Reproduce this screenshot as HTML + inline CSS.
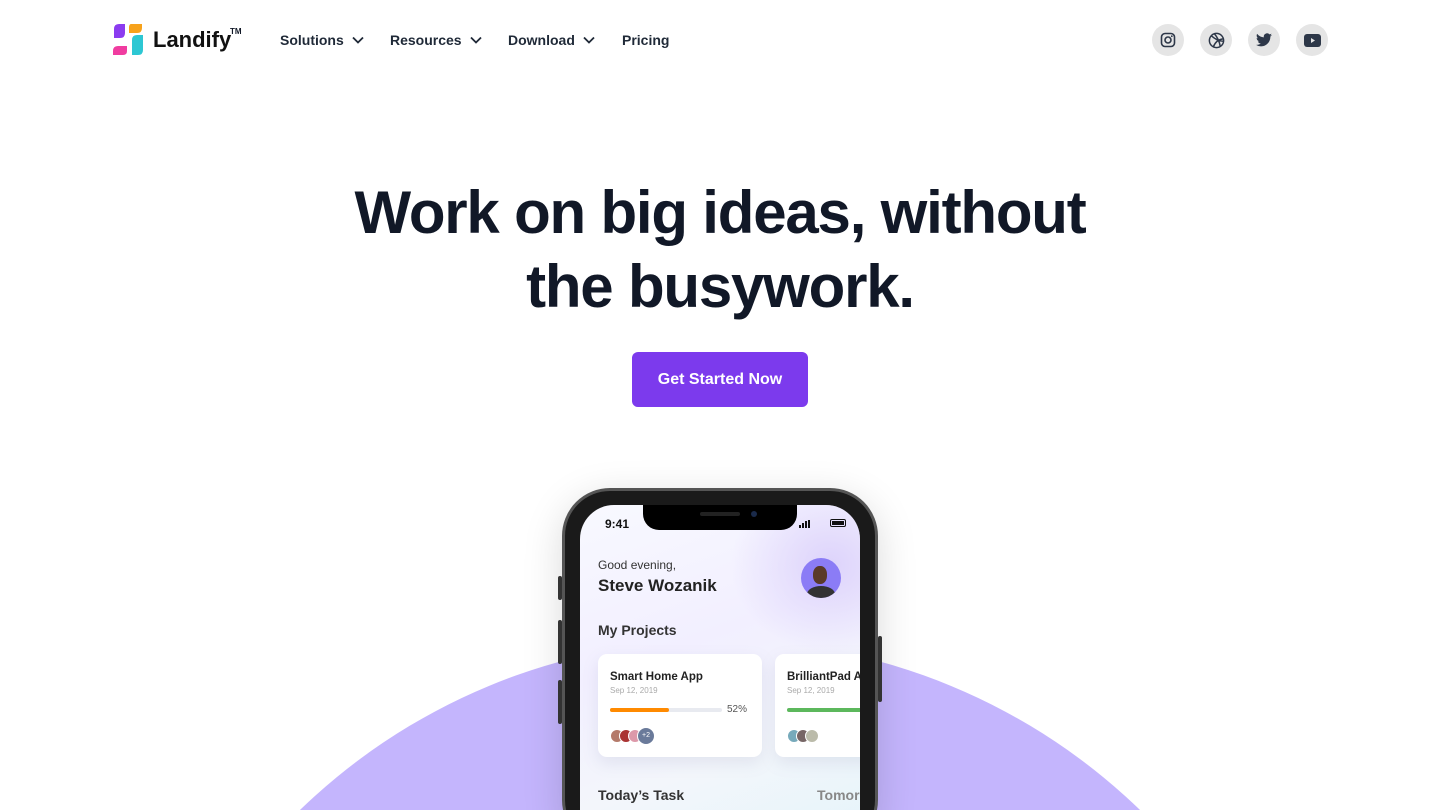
<!DOCTYPE html>
<html style="overflow:hidden;width:1440px;height:810px"><head><meta charset="utf-8"><style>
*{margin:0;padding:0;box-sizing:border-box}
body{width:1440px;height:810px;overflow:hidden;background:#fff;font-family:"Liberation Sans",sans-serif;position:relative;color:#111827}
#wrap{position:absolute;left:0;top:0;width:1440px;height:810px;overflow:hidden}
.nav{position:absolute;top:40px;transform:translateY(-50%);font-size:14px;font-weight:700;color:#1f2937;display:flex;align-items:center}
.nav svg{margin-left:8px}
.soc{position:absolute;top:24px;width:32px;height:32px;border-radius:50%;background:#e5e5e5;display:flex;align-items:center;justify-content:center}
h1{position:absolute;top:176px;left:0;width:1440px;text-align:center;font-size:60px;line-height:74px;font-weight:700;letter-spacing:-1.2px;color:#111827}
.btn{position:absolute;left:632px;top:352px;width:176px;height:55px;border-radius:6px;background:#7c3aed;color:#fff;font-size:16px;font-weight:700;display:flex;align-items:center;justify-content:center}
.arc{position:absolute;left:116px;top:640px;width:1208px;height:1208px;border-radius:50%;background:#c4b5fd}
.phone{position:absolute;left:562px;top:488px;width:316px;height:360px;border-radius:48px;background:#1a1a1a;border:3px solid #555;box-shadow:0 10px 40px rgba(0,0,0,.15)}
.screen{position:absolute;left:580px;top:505px;width:280px;height:340px;border-radius:34px 34px 0 0;overflow:hidden;background:linear-gradient(160deg,#f8f9ff 0%,#f2efff 40%,#f3f6fb 70%,#e4f4fa 100%)}
.glow{position:absolute;left:150px;top:-30px;width:200px;height:180px;border-radius:50%;background:radial-gradient(#ddd3fb,rgba(221,211,251,0) 70%)}
.notch{position:absolute;left:643px;top:505px;width:154px;height:25px;background:#000;border-radius:0 0 16px 16px}
.card{position:absolute;top:149px;width:164px;height:103px;background:#fff;border-radius:9px;box-shadow:0 6px 16px rgba(120,130,170,.15)}
.t{position:absolute;font-family:"Liberation Sans",sans-serif}
.av{position:absolute;width:14px;height:14px;border-radius:50%;border:1px solid #fff}
</style></head><body><div id="wrap">
<svg style="position:absolute;left:112px;top:23px" width="32" height="33" viewBox="0 0 32 33">
<path d="M2 6 Q2 1 7 1 L13 1 L13 10 Q13 15 8 15 L2 15Z" fill="#8b3cf0"/>
<path d="M19 1 L30 1 L30 5 Q30 10 25 10 L17 10 L17 5 Q17 1 19 1Z" fill="#f7a21b"/>
<path d="M20 17 Q20 12 25 12 L31 12 L31 27 Q31 32 26 32 L20 32Z" fill="#2dc7d3"/>
<path d="M1 28 Q1 23 6 23 L15 23 L15 28 Q15 32 11 32 L1 32Z" fill="#f03ca0"/>
</svg>
<div style="position:absolute;left:153px;top:27px;font-size:22px;font-weight:700;color:#111">Landify</div>
<div style="position:absolute;left:230px;top:27px;font-size:8px;font-weight:700">TM</div>
<div class="nav" style="left:280px">Solutions<svg width="12" height="8" viewBox="0 0 12 8"><path d="M1 1.5 6 6.5 11 1.5" fill="none" stroke="#1f2937" stroke-width="1.8"/></svg></div>
<div class="nav" style="left:390px">Resources<svg width="12" height="8" viewBox="0 0 12 8"><path d="M1 1.5 6 6.5 11 1.5" fill="none" stroke="#1f2937" stroke-width="1.8"/></svg></div>
<div class="nav" style="left:508px">Download<svg width="12" height="8" viewBox="0 0 12 8"><path d="M1 1.5 6 6.5 11 1.5" fill="none" stroke="#1f2937" stroke-width="1.8"/></svg></div>
<div class="nav" style="left:622px">Pricing</div>
<div class="soc" style="left:1152px"><svg width="16" height="16" viewBox="0 0 16 16"><rect x="1.5" y="1.5" width="13" height="13" rx="3.5" fill="none" stroke="#2d3748" stroke-width="1.6"/><circle cx="8" cy="8" r="3" fill="none" stroke="#2d3748" stroke-width="1.6"/><circle cx="11.8" cy="4.2" r=".9" fill="#2d3748"/></svg></div>
<div class="soc" style="left:1200px"><svg width="17" height="17" viewBox="0 0 16 16" fill="none" stroke="#2d3748" stroke-width="1.4"><circle cx="8" cy="8" r="6.7"/><path d="M3 3.5C7 7 11 9 14.6 8.6M5 14C7 9 10 7 14 6.5M6 1.6C9 5 11 10 11.6 14"/></svg></div>
<div class="soc" style="left:1248px"><svg width="16" height="14" viewBox="0 0 24 20"><path d="M24 2.4a10 10 0 0 1-2.8.8A5 5 0 0 0 23.3.4a10 10 0 0 1-3.1 1.2A4.9 4.9 0 0 0 11.8 6 14 14 0 0 1 1.7.9a4.9 4.9 0 0 0 1.5 6.6A4.9 4.9 0 0 1 1 6.9 4.9 4.9 0 0 0 4.9 11.8a5 5 0 0 1-2.2.1 4.9 4.9 0 0 0 4.6 3.4A9.9 9.9 0 0 1 0 17.3 14 14 0 0 0 7.5 19.5c9 0 14-7.5 14-14v-.6A10 10 0 0 0 24 2.4z" fill="#2d3748"/></svg></div>
<div class="soc" style="left:1296px"><svg width="17" height="13" viewBox="0 0 17 13"><rect width="17" height="13" rx="3" fill="#2d3748"/><path d="M7 4v5l4-2.5z" fill="#e5e5e5"/></svg></div>
<h1>Work on big ideas, without<br>the busywork.</h1>
<div class="btn">Get Started Now</div>
<div class="arc"></div>
<div class="phone"></div>
<div style="position:absolute;left:558px;top:576px;width:4px;height:24px;background:#333;border-radius:2px"></div>
<div style="position:absolute;left:558px;top:620px;width:4px;height:44px;background:#333;border-radius:2px"></div>
<div style="position:absolute;left:558px;top:680px;width:4px;height:44px;background:#333;border-radius:2px"></div>
<div style="position:absolute;left:878px;top:636px;width:4px;height:66px;background:#333;border-radius:2px"></div>
<div class="screen">
<div class="glow"></div>
<div class="t" style="left:25px;top:12px;font-size:12px;font-weight:700;color:#111">9:41</div>
<div style="position:absolute;left:219px;top:15px;display:flex;gap:1px;align-items:flex-end"><i style="width:2px;height:3px;background:#111"></i><i style="width:2px;height:5px;background:#111"></i><i style="width:2px;height:7px;background:#111"></i><i style="width:2px;height:8px;background:#111"></i></div>
<div style="position:absolute;left:250px;top:14px;width:16px;height:8px;border:1px solid #111;border-radius:2px;padding:1px"><div style="background:#111;height:100%"></div></div>
<div class="t" style="left:18px;top:53px;font-size:12px;color:#333">Good evening,</div>
<div class="t" style="left:18px;top:71px;font-size:17px;font-weight:700;color:#222">Steve Wozanik</div>
<div style="position:absolute;left:221px;top:53px;width:40px;height:40px;border-radius:50%;background:#8b7cf6;overflow:hidden"><div style="position:absolute;left:12px;top:8px;width:14px;height:18px;border-radius:45%;background:#5a3a2a"></div><div style="position:absolute;left:6px;top:28px;width:28px;height:16px;border-radius:50%;background:#333"></div></div>
<div class="t" style="left:18px;top:117px;font-size:14px;font-weight:700;color:#333">My Projects</div>
<div class="card" style="left:18px">
<div class="t" style="left:12px;top:17px;font-size:11.5px;font-weight:700;color:#222">Smart Home App</div>
<div class="t" style="left:12px;top:32px;font-size:8px;color:#aaa">Sep 12, 2019</div>
<div style="position:absolute;left:12px;top:54px;width:112px;height:4px;border-radius:2px;background:#e8eaf0"><div style="width:59px;height:4px;border-radius:2px;background:#ff8a00"></div></div>
<div class="t" style="left:129px;top:50px;font-size:10px;color:#555">52%</div>
<div class="av" style="left:12px;top:75px;background:#b47a6a"></div><div class="av" style="left:21px;top:75px;background:#a33"></div><div class="av" style="left:30px;top:75px;background:#d9a"></div><div class="av" style="left:39px;top:73px;width:18px;height:18px;background:#6a7a9a;color:#fff;font-size:7px;text-align:center;line-height:16px">+2</div>
</div>
<div class="card" style="left:195px">
<div class="t" style="left:12px;top:17px;font-size:11.5px;font-weight:700;color:#222;white-space:nowrap">BrilliantPad App</div>
<div class="t" style="left:12px;top:32px;font-size:8px;color:#aaa">Sep 12, 2019</div>
<div style="position:absolute;left:12px;top:54px;width:112px;height:4px;border-radius:2px;background:#5cb85c"></div>
<div class="av" style="left:12px;top:75px;background:#7ab"></div><div class="av" style="left:21px;top:75px;background:#766"></div><div class="av" style="left:30px;top:75px;background:#bba"></div>
</div>
<div class="t" style="left:18px;top:282px;font-size:14px;font-weight:700;color:#333">Today’s Task</div>
<div class="t" style="left:237px;top:282px;font-size:14px;font-weight:700;color:#888;white-space:nowrap">Tomorrow</div>
</div>
<div class="notch"></div>
<div style="position:absolute;left:700px;top:512px;width:40px;height:4px;border-radius:2px;background:#222"></div>
<div style="position:absolute;left:751px;top:511px;width:6px;height:6px;border-radius:50%;background:#1a2a4a"></div>
</div></body></html>
